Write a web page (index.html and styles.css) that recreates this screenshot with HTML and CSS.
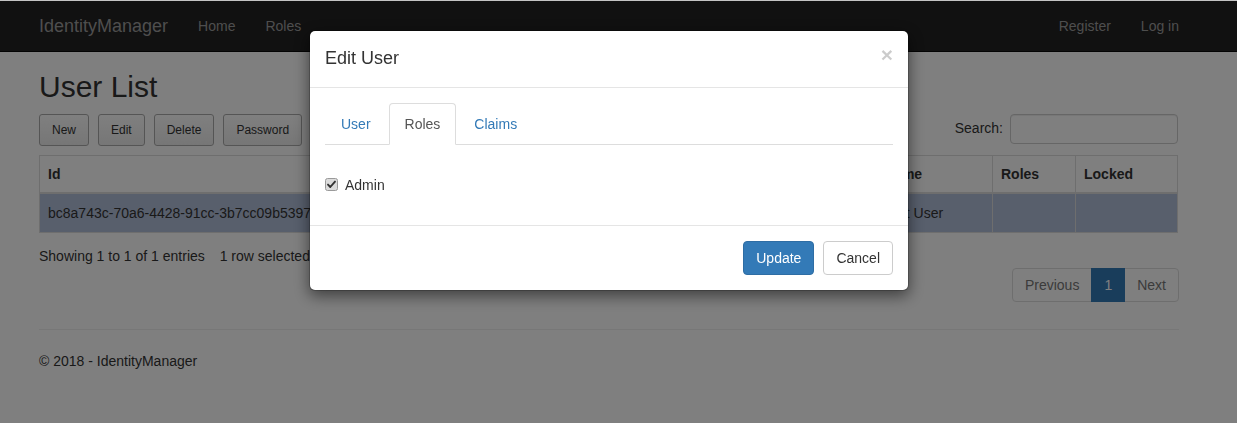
FILE: index.html
```html
<!DOCTYPE html>
<html lang="en">
<head>
<meta charset="utf-8">
<title>User List - IdentityManager</title>
<link rel="stylesheet" href="styles.css">
</head>
<body>
<nav class="navbar">
  <div class="container navbar-inner">
    <div class="navbar-left">
      <a class="brand" href="#">IdentityManager</a>
      <a class="nav-link" href="#">Home</a>
      <a class="nav-link" href="#">Roles</a>
    </div>
    <div class="navbar-right">
      <a class="nav-link" href="#">Register</a>
      <a class="nav-link" href="#">Log in</a>
    </div>
  </div>
</nav>

<main class="container page">
  <h2 class="page-title">User List</h2>
  <div class="toolbar">
    <div class="dt-buttons">
      <button class="dt-button">New</button>
      <button class="dt-button">Edit</button>
      <button class="dt-button">Delete</button>
      <button class="dt-button">Password</button>
    </div>
    <label class="search">Search:<input class="search-input" type="search"></label>
  </div>

  <table class="data-table">
    <colgroup>
      <col class="c-id"><col class="c-email"><col class="c-username"><col class="c-name"><col class="c-roles"><col class="c-locked">
    </colgroup>
    <thead>
      <tr><th>Id</th><th>Email</th><th>UserName</th><th>Name</th><th>Roles</th><th>Locked</th></tr>
    </thead>
    <tbody>
      <tr class="selected"><td>bc8a743c-70a6-4428-91cc-3b7cc09b5397</td><td>test@example.com</td><td>test</td><td>Test User</td><td></td><td></td></tr>
    </tbody>
  </table>

  <div class="table-info">Showing 1 to 1 of 1 entries <span class="select-info">1 row selected</span></div>
  <div class="paginate">
    <ul class="pagination">
      <li class="disabled"><a href="#">Previous</a></li>
      <li class="active"><a href="#">1</a></li>
      <li class="disabled"><a href="#">Next</a></li>
    </ul>
  </div>

  <hr class="rule">
  <footer class="site-footer">
    <p>&copy; 2018 - IdentityManager</p>
  </footer>
</main>

<div class="backdrop"></div>

<div class="modal">
  <div class="modal-dialog">
    <div class="modal-content">
      <div class="modal-header">
        <button class="close" type="button">&times;</button>
        <h4 class="modal-title">Edit User</h4>
      </div>
      <div class="modal-body">
        <ul class="nav-tabs">
          <li><a href="#">User</a></li>
          <li class="active"><a href="#">Roles</a></li>
          <li><a href="#">Claims</a></li>
        </ul>
        <div class="tab-pane">
          <div class="checkbox">
            <label class="check-label">
              <svg class="check-box" width="13" height="13" viewBox="0 0 13 13" aria-hidden="true">
                <rect x="0.5" y="0.5" width="12" height="12" rx="2" ry="2" fill="#dcdcdc" stroke="#9a9a9a"/>
                <path d="M3 6.6 L5.3 9 L10 3.6" fill="none" stroke="#333" stroke-width="1.9" stroke-linecap="round" stroke-linejoin="round"/>
              </svg>
              Admin
            </label>
          </div>
        </div>
      </div>
      <div class="modal-footer">
        <button class="btn btn-primary" type="button">Update</button>
        <button class="btn btn-default" type="button">Cancel</button>
      </div>
    </div>
  </div>
</div>
</body>
</html>
```
FILE: styles.css
```css
* { box-sizing: border-box; }

html { margin: 0; background: #fff; }

body {
  margin: 0;
  min-height: 100vh;
  border-top: 1px solid #c4c4c4;
  background: #fff;
  font-family: "Liberation Sans", Arial, Helvetica, sans-serif;
  font-size: 14px;
  line-height: 1.42857;
  color: #333;
}

a { text-decoration: none; }

.container {
  width: 1170px;
  margin-left: 24px;
  padding: 0 15px;
}

/* Navbar */
.navbar {
  background: #222;
  border-bottom: 1px solid #080808;
  height: 51px;
}
.navbar-inner {
  display: flex;
  justify-content: space-between;
  height: 50px;
}
.navbar-left, .navbar-right { display: flex; }
.navbar-left { margin-left: -15px; }
.navbar-right { margin-right: -15px; }
.brand {
  font-size: 18px;
  line-height: 20px;
  padding: 15px;
  color: #9d9d9d;
}
.nav-link {
  padding: 15px;
  line-height: 20px;
  color: #9d9d9d;
}

/* Page */
.page-title {
  font-size: 30px;
  font-weight: 500;
  line-height: 1.1;
  margin: 18px 0 11px;
}

.toolbar {
  display: flex;
  justify-content: space-between;
  align-items: flex-start;
  width: 1139px;
}
.dt-buttons { display: flex; gap: 9px; }
.dt-button {
  font-family: inherit;
  font-size: 12px;
  line-height: 18px;
  padding: 6px 12px;
  color: #333;
  background: linear-gradient(to bottom, #ffffff 0%, #ededed 100%);
  border: 1px solid #ababab;
  border-radius: 3px;
}
.dt-button.wide { padding: 6px 13px; }
.search {
  display: flex;
  align-items: center;
  font-weight: normal;
  color: #333;
}
.search-input {
  width: 168px;
  height: 30px;
  margin-left: 7px;
  border: 1px solid #ccc;
  border-radius: 4px;
  box-shadow: inset 0 1px 1px rgba(0,0,0,.075);
}

.data-table {
  width: 1139px;
  margin-top: 9px;
  margin-bottom: 6px;
  border-collapse: collapse;
  table-layout: fixed;
  border: 1px solid #ddd;
}
.c-id { width: 380px; }
.c-email { width: 250px; }
.c-username { width: 206px; }
.c-name { width: 117px; }
.c-roles { width: 83px; }
.c-locked { width: 102px; }
.data-table th, .data-table td {
  padding: 8px;
  line-height: 20px;
  text-align: left;
  border: 1px solid #ddd;
  white-space: nowrap;
  overflow: hidden;
}
.data-table td { padding-top: 9px; padding-bottom: 9px; }
.data-table thead th { border-bottom: 2px solid #ddd; font-weight: bold; }
.data-table tr.selected td { background: #b0bed9; }

.table-info { padding-top: 8px; }
.select-info { margin-left: 11px; }

.paginate { display: flex; justify-content: flex-end; }
.pagination {
  display: flex;
  list-style: none;
  margin: 1px 0 2px;
  padding: 0;
}
.pagination a {
  display: block;
  padding: 6px 12px;
  line-height: 20px;
  border: 1px solid #ddd;
  margin-left: -1px;
  color: #337ab7;
  background: #fff;
}
.pagination li:first-child a { margin-left: 0; border-radius: 4px 0 0 4px; }
.pagination li:last-child a { border-radius: 0 4px 4px 0; }
.pagination .disabled a { color: #777; }
.pagination .active a { background: #337ab7; border-color: #337ab7; color: #fff; position: relative; }

.rule {
  margin: 25px 0 22px;
  border: 0;
  border-top: 1px solid #eee;
}
.site-footer p { margin: 0 0 10px; }

/* Backdrop & modal (overlays) */
.backdrop {
  position: fixed;
  top: 1px; left: 0; right: 0; bottom: 0;
  background: rgba(0,0,0,.5);
  z-index: 1040;
}
.modal {
  position: fixed;
  top: 1px; left: 0; right: 19px; bottom: 0;
  z-index: 1050;
}
.modal-dialog {
  width: 600px;
  margin: 29px auto;
}
.modal-content {
  background: #fff;
  border: 1px solid rgba(0,0,0,.2);
  border-radius: 6px;
  box-shadow: 0 5px 15px rgba(0,0,0,.5);
  background-clip: padding-box;
}
.modal-header {
  padding: 15px;
  border-bottom: 1px solid #e5e5e5;
}
.modal-title {
  margin: 0;
  font-size: 18px;
  font-weight: 500;
  line-height: 1.42857;
}
.close {
  float: right;
  margin-top: -2px;
  padding: 0;
  border: 0;
  background: transparent;
  font-family: inherit;
  font-size: 21px;
  font-weight: bold;
  line-height: 1;
  color: #000;
  opacity: .2;
}
.modal-body { padding: 15px; }

.nav-tabs {
  display: flex;
  list-style: none;
  margin: 0;
  padding: 0;
  border-bottom: 1px solid #ddd;
}
.nav-tabs li { margin-bottom: -1px; }
.nav-tabs a {
  display: block;
  margin-right: 2px;
  padding: 10px 15px;
  line-height: 20px;
  border: 1px solid transparent;
  border-radius: 4px 4px 0 0;
  color: #337ab7;
}
.nav-tabs .active a {
  color: #555;
  background: #fff;
  border-color: #ddd;
  border-bottom-color: transparent;
}

.tab-pane { padding: 20px 0 5px; }
.checkbox { margin: 10px 0; }
.check-label {
  display: flex;
  align-items: center;
  gap: 7px;
  line-height: 20px;
}
.check-box { flex: none; }

.modal-footer {
  display: flex;
  justify-content: flex-end;
  gap: 9px;
  padding: 15px;
  border-top: 1px solid #e5e5e5;
}
.btn {
  font-family: inherit;
  font-size: 14px;
  line-height: 20px;
  padding: 6px 12px;
  border: 1px solid transparent;
  border-radius: 4px;
}
.btn-primary { background: #337ab7; border-color: #2e6da4; color: #fff; }
.btn-default { background: #fff; border-color: #ccc; color: #333; }
```
